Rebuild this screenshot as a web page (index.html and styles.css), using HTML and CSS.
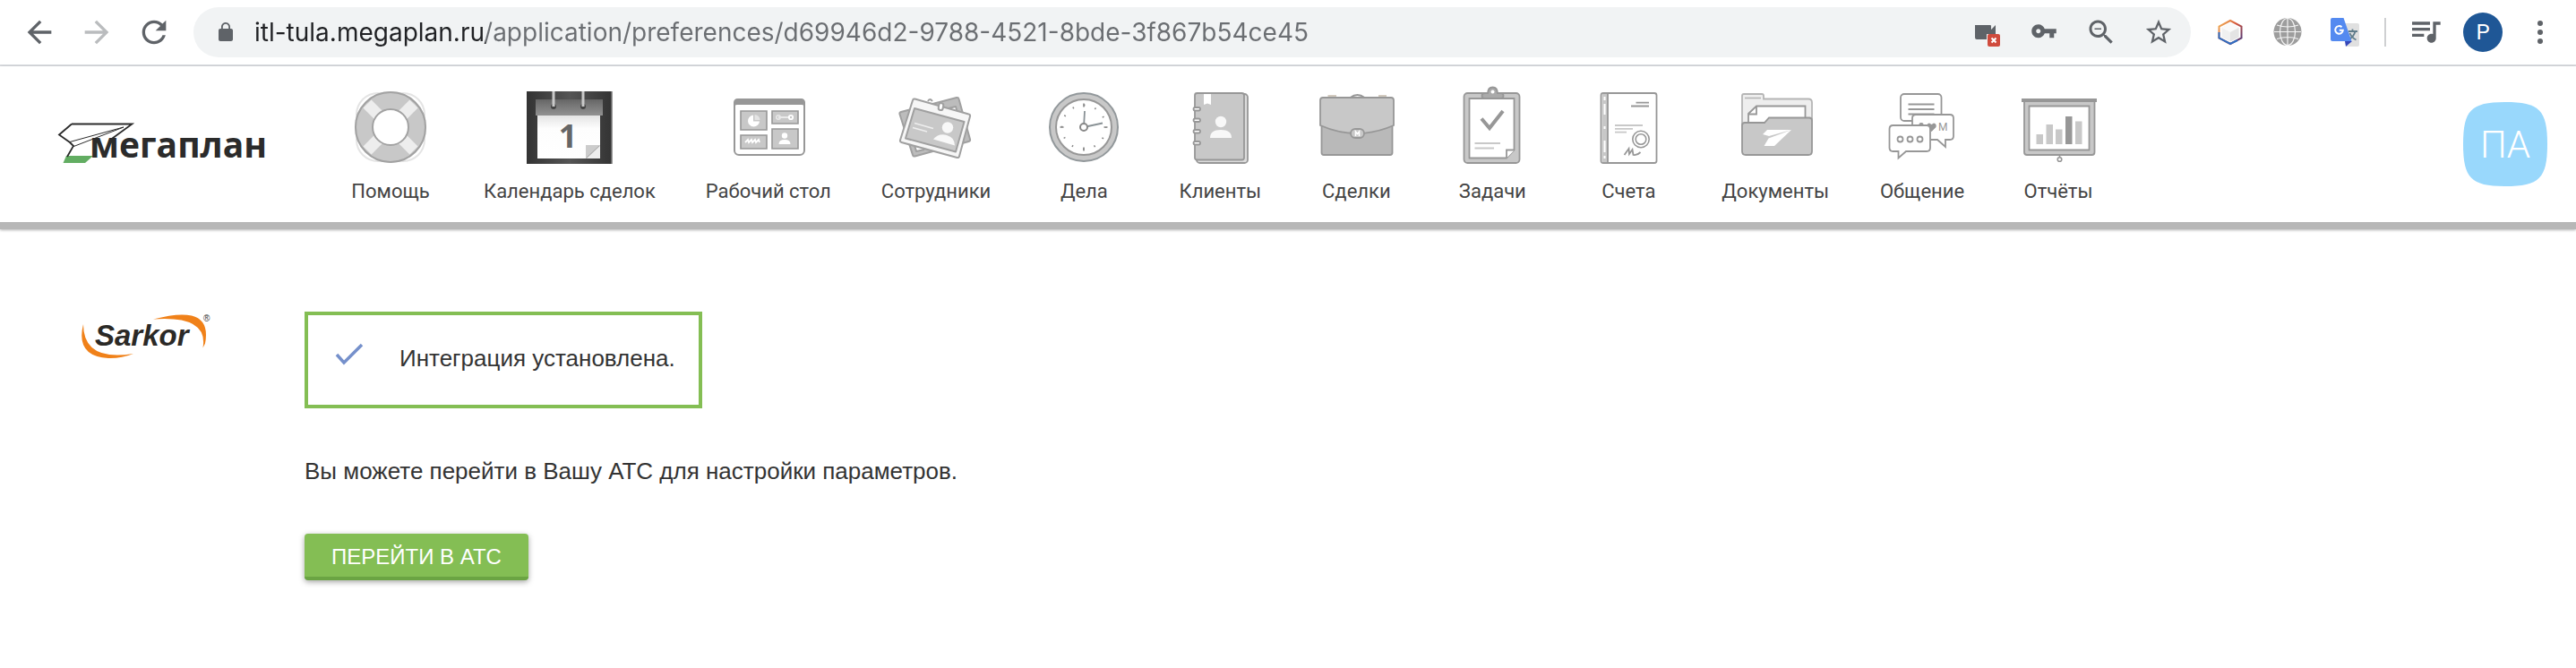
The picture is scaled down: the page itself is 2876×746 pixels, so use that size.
FILE: index.html
```
<!DOCTYPE html>
<html lang="ru">

<head>
  <meta charset="utf-8">
  <title>Мегаплан</title>
  <link rel="stylesheet" href="styles.css">
</head>

<body>
  <div class="toolbar">
    <button class="tool" aria-label="Назад">
      <svg width="40" height="40" viewBox="0 0 24 24"><path d="M20 11H7.83l5.59-5.59L12 4l-8 8 8 8 1.41-1.41L7.83 13H20z"/></svg>
    </button>
    <button class="tool tool-off" aria-label="Вперёд">
      <svg width="40" height="40" viewBox="0 0 24 24"><path d="M4 11h12.17l-5.59-5.59L12 4l8 8-8 8-1.41-1.41L16.17 13H4z"/></svg>
    </button>
    <button class="tool" aria-label="Обновить">
      <svg width="40" height="40" viewBox="0 0 24 24"><path d="M17.65 6.35C16.2 4.9 14.21 4 12 4c-4.42 0-7.99 3.58-7.99 8s3.57 8 7.99 8c3.73 0 6.84-2.55 7.73-6h-2.08c-.82 2.33-3.04 4-5.65 4-3.31 0-6-2.69-6-6s2.69-6 6-6c1.66 0 3.14.69 4.22 1.78L13 11h7V4z"/></svg>
    </button>

    <div class="omnibox">
      <button class="tool" aria-label="Сведения о сайте">
        <svg width="24" height="24" viewBox="0 0 24 24"><path d="M18 8h-1V6c0-2.8-2.2-5-5-5S7 3.200 7 6v2H6c-1.100 0-2 .9-2 2v10c0 1.100.9 2 2 2h12c1.100 0 2-.9 2-2V10c0-1.100-.9-2-2-2zM8.800 8V6c0-1.800 1.400-3.200 3.200-3.200s3.200 1.400 3.200 3.200v2z"/></svg>
      </button>
      <input class="url" type="text" aria-label="Адрес" value="itl-tula.megaplan.ru/application/preferences/d69946d2-9788-4521-8bde-3f867b54ce45">
      <button class="tool" aria-label="Камера заблокирована">
        <svg width="32" height="32" viewBox="0 0 32 32">
          <path d="M3 8h17q1 0 1 1v4l5-5v14q0 2-2 2H5q-2 0-2-2z"/>
          <path d="M16 18h16v14H16z" fill="#f1f3f4"/>
          <rect x="17" y="18" width="14" height="14" rx="2" fill="#d04b3d"/>
          <path d="M21.500 22.500l5 5M26.500 22.500l-5 5" stroke="#fff" stroke-width="2"/>
        </svg>
      </button>
      <button class="tool" aria-label="Пароли">
        <svg width="30" height="30" viewBox="0 1 24 24"><path d="M12.65 10C11.83 7.67 9.61 6 7 6c-3.31 0-6 2.69-6 6s2.69 6 6 6c2.610 0 4.830-1.670 5.650-4H17v4h4v-4h2v-4zM7 14c-1.100 0-2-.9-2-2s.9-2 2-2 2 .9 2 2-.9 2-2 2z"/></svg>
      </button>
      <button class="tool" aria-label="Масштаб">
        <svg width="36" height="36" viewBox="0 0 24 24"><path d="M15.5 14h-.79l-.28-.27C15.41 12.59 16 11.11 16 9.500 16 5.910 13.090 3 9.500 3S3 5.910 3 9.500 5.910 16 9.500 16c1.610 0 3.090-.59 4.230-1.570l.27.28v.79l5 4.990L20.490 19zm-6 0C7.010 14 5 11.990 5 9.500S7.010 5 9.500 5 14 7.010 14 9.500 11.990 14 9.500 14zM7 9h5v1H7z"/></svg>
      </button>
      <button class="tool" aria-label="В закладки">
        <svg width="34" height="34" viewBox="0 0 24 24"><path d="M22 9.240l-7.190-.62L12 2 9.190 8.630 2 9.240l5.460 4.730L5.820 21 12 17.270 18.180 21l-1.630-7.030zM12 15.400l-3.760 2.270 1-4.280-3.320-2.880 4.380-.38L12 6.100l1.710 4.040 4.380.38-3.320 2.880 1 4.280z"/></svg>
      </button>
    </div>

    <button class="tool" aria-label="Расширение">
      <svg width="32" height="32" viewBox="0 0 32 32">
        <defs>
          <linearGradient id="hex" x1="0" y1="0" x2="1" y2="1">
            <stop offset="0" stop-color="#f6c15c"/>
            <stop offset=".45" stop-color="#d5543a"/>
            <stop offset="1" stop-color="#3a3380"/>
          </linearGradient>
        </defs>
        <path d="M16 3l12.500 6.500v13L16 29 3.500 22.500v-13z" fill="#fff" stroke="url(#hex)" stroke-width="2"/>
        <path d="M3.500 16v6.500L16 29l8-4" fill="none" stroke="#2f6fc4" stroke-width="2"/>
        <path d="M16 6l9.500 5v10.500L16 26.500 6.500 21.500V11z" fill="#f0f0f0"/>
        <path d="M16 6l9.500 5-9.500 5-9.500-5z" fill="#fafafa"/>
        <path d="M16 16l9.500-5v10.500l-9.500 5z" fill="#e4e4e4"/>
      </svg>
    </button>
    <button class="tool" aria-label="Прокси">
      <svg width="32" height="32" viewBox="0 0 32 32">
        <circle cx="16" cy="15.500" r="15.500" fill="#9d9d9d"/>
        <path d="M16 0v31M1 15.500h30M4 8q12 4 24 0M4 23.500q12-4 24 0" fill="none" stroke="#f4f4f4" stroke-width="1.200"/>
        <ellipse cx="16" cy="15.500" rx="8.500" ry="15" fill="none" stroke="#f4f4f4" stroke-width="1.200"/>
      </svg>
    </button>
    <button class="tool" aria-label="Переводчик">
      <svg width="32" height="32" viewBox="0 0 32 32">
        <path d="M12 6h18q2 0 2 2v22q0 2-2 2H18z" fill="#e0e0e0"/>
        <path d="M20 15h10M24.500 12.500V15M27.500 15q-1.500 6-7 9M21.500 17q2 5 7 7.500" fill="none" stroke="#607d8b" stroke-width="1.800"/>
        <path d="M16 26h8l-7 6z" fill="#3546b8"/>
        <path d="M2 0h12.500l9 26H2q-2 0-2-2V2q0-2 2-2z" fill="#548af0"/>
        <path d="M12.500 10.300a4.300 4.300 0 1 0 1.300 3.400h-4" fill="none" stroke="#fff" stroke-width="2"/>
      </svg>
    </button>
    <span class="divider"></span>
    <button class="tool" aria-label="Медиа">
      <svg width="40" height="40" viewBox="0 1 24 24"><path d="M15 6H3v2h12zm0 4H3v2h12zM3 16h8v-2H3zM17 6v8.180c-.31-.11-.65-.18-1-.18-1.660 0-3 1.340-3 3s1.340 3 3 3 3-1.340 3-3V8h3V6z"/></svg>
    </button>
    <button class="tool" aria-label="Профиль"><span class="profile">P</span></button>
    <button class="tool" aria-label="Меню">
      <svg width="32" height="32" viewBox="0 0 32 32"><circle cx="16" cy="6" r="3"/><circle cx="16" cy="16" r="3"/><circle cx="16" cy="26" r="3"/></svg>
    </button>
  </div>

  <header class="header">
    <a class="logo" href="#" aria-label="Мегаплан">
      <svg width="244" height="48" viewBox="0 0 244 48">
        <path d="M6.500 45l3.500-8h30l-9 8z" fill="#62ad62"/>
        <path d="M16 1.500h67.500L58 20M16 1.500L2 13.500l12 8.500 4 4-7 12" fill="none" stroke="#2b2b2b" stroke-width="1.800"/>
        <path d="M14 21.500L74 5 17 27" fill="none" stroke="#2b2b2b"/>
        <text class="logo-text" x="36" y="39">мегаплан</text>
      </svg>
    </a>

    <nav class="menu">
      <a class="item" href="#">
        <svg class="icon" viewBox="0 0 96 96">
          <rect x="10" y="10" width="76" height="76" rx="24" fill="none" stroke="#e4e4e4" stroke-width="2"/>
          <circle cx="48" cy="48" r="30" fill="none" stroke="#c8c8c8" stroke-width="20"/>
          <path d="M22 22l14 14M74 22L60 36M22 74l14-14M74 74L60 60" stroke="#ededed" stroke-width="13"/>
          <circle cx="48" cy="48" r="39" fill="none" stroke="#a2a2a2" stroke-width="2"/>
          <circle cx="48" cy="48" r="20" fill="#fff" stroke="#a2a2a2" stroke-width="2"/>
        </svg>
        Помощь
      </a>
      <a class="item" href="#">
        <svg class="icon" viewBox="0 0 96 96">
          <defs>
            <linearGradient id="dark"><stop offset="0" stop-color="#333"/><stop offset=".5" stop-color="#555"/><stop offset="1" stop-color="#333"/></linearGradient>
            <linearGradient id="head" x2="0" y2="1"><stop offset="0" stop-color="#666"/><stop offset="1" stop-color="#929292"/></linearGradient>
            <linearGradient id="sheet" x2="0" y2="1"><stop offset="0" stop-color="#e4e4e4"/><stop offset=".3" stop-color="#fdfdfd"/><stop offset="1" stop-color="#fff"/></linearGradient>
          </defs>
          <path d="M0 8h96v81H0z" fill="url(#dark)"/>
          <path d="M94.500 8H96v81h-1.500z" fill="#999"/>
          <path d="M10 17h75v18H10z" fill="url(#head)"/>
          <path d="M12 35h70v48H12z" fill="url(#sheet)"/>
          <circle cx="30" cy="25" r="3" fill="#444"/>
          <circle cx="63" cy="25" r="3" fill="#444"/>
          <path d="M30 8v17M63 8v17" stroke="#c9c9c9" stroke-width="3"/>
          <text class="day" x="46" y="71">1</text>
          <path d="M66 68h16v15H66z" fill="#ccc"/>
          <path d="M82 69v14H67z" fill="#efefef"/>
          <path d="M81 69L67 82" stroke="#aaa"/>
        </svg>
        Календарь сделок
      </a>
      <a class="item" href="#">
        <svg class="icon" viewBox="0 0 96 96">
          <rect x="10" y="17" width="78" height="62" rx="5" fill="#fff" stroke="#979797" stroke-width="2"/>
          <path d="M9 27v-6q0-5 5-5h70q5 0 5 5v6q-1-4-4-4H13q-3 0-4 4z" fill="#979797"/>
          <g fill="#c8c8c8" stroke="#979797" stroke-width="1.600">
            <path d="M17 30h29v21H17zM52 30h29v14H52zM17 57h29v15H17zM52 50h29v22H52z"/>
          </g>
          <path d="M31 34.500a6.500 6.500 0 1 0 7 7h-7z" fill="#fff"/>
          <path d="M32.500 34a6 6 0 0 1 6 6h-6z" fill="#e4e4e4"/>
          <path d="M59 37h13" stroke="#f4f4f4" stroke-width="1.500"/>
          <circle cx="59" cy="37" r="2.200" fill="none" stroke="#e8e8e8" stroke-width="1.500"/>
          <circle cx="73" cy="37" r="2.200" fill="none" stroke="#fff" stroke-width="1.800"/>
          <path d="M22 65l3-3 1 3 3-3 1 3 3-3 1 3 3-3 1 3" fill="none" stroke="#fff" stroke-width="1.800"/>
          <circle cx="66" cy="57.500" r="3.200" fill="#fff"/>
          <path d="M59.500 67q0-5 6.500-5t6.500 5z" fill="#fff"/>
        </svg>
        Рабочий стол
      </a>
      <a class="item" href="#">
        <svg class="icon" viewBox="0 0 96 96">
          <g stroke="#a0a0a0" stroke-width="2" stroke-linejoin="round">
            <path d="M7.500 33.500q-.5-2 1.500-2.500l62-16q2-.5 2.500 1.500l12.500 45q.5 2-1.500 2.500l-60 16.500q-2 .5-2.500-1.500z" fill="#bcbcbc"/>
            <path d="M62 27l8-2 2 7M24 68l2 7 9-2" fill="#fff"/>
            <path d="M22 18q.5-2 2.500-1.500l60 17q2 .5 1.500 2.500L74 80.500q-.5 2-2.500 1.500l-62-17q-2-.5-1.500-2.500z" fill="#f6f6f6"/>
            <path d="M24 27l55.500 15L70 75.500 14 60.500z" fill="#c8c8c8"/>
            <path d="M39 19q2-4 5 0" fill="none"/>
            <rect x="51" y="21" width="5" height="8" rx="2.500" fill="#fff" transform="rotate(10 53 25)"/>
          </g>
          <path d="M24 43.500l21 6M22 48.500l16 4.500" stroke="#eee" stroke-width="1.800"/>
          <circle cx="61" cy="48.500" r="6.200" fill="#f8f8f8"/>
          <path d="M45 61.500q6-7 15-4.500t9 11.500z" fill="#f8f8f8"/>
        </svg>
        Сотрудники
      </a>
      <a class="item" href="#">
        <svg class="icon" viewBox="0 0 96 96">
          <circle cx="48" cy="48" r="38" fill="#c8c8c8" stroke="#92989b" stroke-width="2"/>
          <circle cx="48" cy="48" r="31" fill="#fff" stroke="#979797" stroke-width="2"/>
          <circle cx="48" cy="48" r="24.500" fill="none" stroke="#888" stroke-width="2" stroke-dasharray="1.500 11.328" stroke-dashoffset=".75"/>
          <path d="M48 21.500v4M48 70.500v4M21.500 48h4M70.500 48h4" stroke="#888" stroke-width="1.600"/>
          <path d="M48 48l1-18M48 48l21-4.500" stroke="#8a9296" stroke-width="1.800"/>
          <circle cx="48" cy="48" r="4" fill="#fff" stroke="#888" stroke-width="2"/>
        </svg>
        Дела
      </a>
      <a class="item" href="#">
        <svg class="icon" viewBox="0 0 96 96">
          <g stroke="#979797" stroke-width="1.800">
            <rect x="22" y="11" width="57" height="77" rx="3.500" fill="#dcdcdc"/>
            <rect x="20" y="10" width="55" height="74.500" rx="2.500" fill="#c8c8c8"/>
            <rect x="18.500" y="26" width="7.500" height="3.500" rx="1.700" fill="#fff"/>
            <rect x="18.500" y="38.500" width="7.500" height="3.500" rx="1.700" fill="#fff"/>
            <rect x="18.500" y="51" width="7.500" height="3.500" rx="1.700" fill="#fff"/>
            <rect x="18.500" y="64" width="7.500" height="3.500" rx="1.700" fill="#fff"/>
          </g>
          <path d="M30 11h8v12l-4-1.500-4 1.500z" fill="#fff"/>
          <circle cx="49" cy="42" r="6.200" fill="#f8f8f8"/>
          <path d="M37 60q0-9 12-9t12 9z" fill="#f8f8f8"/>
        </svg>
        Клиенты
      </a>
      <a class="item" href="#">
        <svg class="icon" viewBox="0 0 96 96">
          <path d="M16.500 12h9.500v3h-9.500zM73 12h9v3h-9z" fill="#d3cbc0"/>
          <g stroke="#979797" stroke-width="1.800">
            <path d="M9.500 45v31.500q0 2.500 2.500 2.500h74q2.500 0 2.500-2.500V45z" fill="#b9b9b9"/>
            <path d="M8 18q0-3 3-3h76q3 0 3 3v28Q49 64 8 46z" fill="#c8c8c8"/>
            <path d="M41.500 15q8-6 16 0" fill="none"/>
            <rect x="42" y="50" width="15" height="10" rx="5" fill="#c8c8c8"/>
          </g>
          <path d="M47.500 58v-5l2 2.500 2-2.500v5" fill="none" stroke="#fff" stroke-width="1.600"/>
        </svg>
        Сделки
      </a>
      <a class="item" href="#">
        <svg class="icon" viewBox="0 0 96 96">
          <g stroke="#979797" stroke-width="1.800">
            <rect x="16.500" y="10" width="62" height="78" rx="4" fill="#c8c8c8"/>
            <path d="M22.500 16h50v57.500L64 82.500H22.500z" fill="#fff"/>
            <path d="M64 82.500v-9h9" fill="#fff"/>
            <rect x="36.500" y="10" width="24" height="6" rx="3" fill="#aaa"/>
            <path d="M43 11q0-7.500 5.500-7.500T54 11" fill="#aaa"/>
          </g>
          <circle cx="48.500" cy="8.500" r="2" fill="#fff"/>
          <path d="M36 38.500l9 10.500 15-19" fill="none" stroke="#979797" stroke-width="4"/>
          <path d="M28.500 66H57M28.500 71.500H50" stroke="#c8c8c8" stroke-width="1.800"/>
        </svg>
        Задачи
      </a>
      <a class="item" href="#">
        <svg class="icon" viewBox="0 0 96 96">
          <rect x="17.500" y="10" width="62" height="78" rx="2.500" fill="#fff" stroke="#979797" stroke-width="1.800"/>
          <path d="M18.400 10.900H25v76.200h-6.600z" fill="#c8c8c8"/>
          <path d="M25 10v78M56.500 20.700H71M51 24.500h20" stroke="#979797" stroke-width="1.800"/>
          <path d="M21.500 14v4M21.500 22v12M21.500 47v3M21.500 63v13M21.500 80v3" stroke="#fff" stroke-width="2"/>
          <path d="M33 46h31M33 49.800h20M33 53.600h13" stroke="#c8c8c8" stroke-width="1.800"/>
          <g fill="none" stroke="#979797" stroke-width="1.600">
            <circle cx="62" cy="61.500" r="9.200"/>
            <circle cx="62" cy="61.500" r="5.800"/>
            <path d="M43.500 79l5-7 .5 6 3.500-5 1 6q4 1 8-3" stroke-width="1.800"/>
          </g>
        </svg>
        Счета
      </a>
      <a class="item" href="#">
        <svg class="icon" viewBox="0 0 96 96">
          <path d="M11 50V13q0-2 2-2h20q2 0 2 2v3.500h50q4 0 4 4V50z" fill="#eee" stroke="#b5b5b5" stroke-width="1.800"/>
          <path d="M14 15.500h18" stroke="#b5b5b5" stroke-width="1.600"/>
          <g stroke="#979797" stroke-width="1.800">
            <path d="M18 50V33l9-8.500h54.500V50z" fill="#fff"/>
            <path d="M18 33.500h9v-9" fill="none"/>
            <path d="M11 46q0-3 3-3h22l5-5.500h45q3 0 3 3V75q0 4-4 4H15q-4 0-4-4z" fill="#c8c8c8"/>
          </g>
          <path d="M34 56l5-5h27L41 58zM66 51L47 69H35.500l5-8.500z" fill="#fff"/>
        </svg>
        Документы
      </a>
      <a class="item" href="#">
        <svg class="icon" viewBox="0 0 96 96">
          <g fill="#fff" stroke="#979797" stroke-width="1.800">
            <rect x="24" y="11" width="45.500" height="30" rx="4"/>
            <path d="M32.500 22.500h29M32.500 28h29M32.500 33.500h29"/>
            <path d="M41 34h38q4 0 4 4v20q0 4-4 4h-5v8l-9-8H41q-4 0-4-4V38q0-4 4-4z"/>
          </g>
          <path d="M58.500 53l-5-5q-1-4 2.500-4.500l2.500 1.500 2.500-1.500q3.500.5 2.500 4.500z" fill="#979797"/>
          <text class="bubble-text" x="66" y="52">M</text>
          <path d="M45 45q2-2 4 0" fill="none" stroke="#979797" stroke-width="1.800"/>
          <g fill="#fff" stroke="#979797" stroke-width="1.800">
            <path d="M15.500 46H53q4 0 4 4v21q0 4-4 4H30l-8.500 7.500V75h-6q-4 0-4-4V50q0-4 4-4z"/>
            <circle cx="23.500" cy="61.500" r="3"/>
            <circle cx="34.500" cy="61.500" r="3"/>
            <circle cx="45.500" cy="61.500" r="3"/>
          </g>
        </svg>
        Общение
      </a>
      <a class="item" href="#">
        <svg class="icon" viewBox="0 0 96 96">
          <path d="M10 18h78.500v58q0 3-3 3H13q-3 0-3-3z" fill="#c8c8c8" stroke="#979797" stroke-width="1.800"/>
          <path d="M7 16h84v4H7z" fill="#979797"/>
          <path d="M15.500 24.500h67v49h-67z" fill="#fff" stroke="#979797" stroke-width="1.800"/>
          <path d="M23.500 56H31v11h-7.500zM34.500 45H42v22h-7.500zM45 50.500h7.500V67H45zM67 41.500h7.500V67H67z" fill="#c8c8c8"/>
          <path d="M56 36h7.500v31H56z" fill="#979797"/>
          <path d="M49.500 79v3" stroke="#979797" stroke-width="1.600"/>
          <circle cx="49.500" cy="84" r="2.300" fill="#fff" stroke="#979797" stroke-width="1.600"/>
        </svg>
        Отчёты
      </a>
    </nav>

    <button class="user" aria-label="Профиль пользователя">
      <svg width="94" height="94" viewBox="0 0 94 94">
        <path d="M47 0c38 0 47 9 47 47s-9 47-47 47S0 85 0 47 9 0 47 0z" fill="#99d8fc"/>
        <text class="user-text" x="47" y="62">ПА</text>
      </svg>
    </button>
  </header>

  <main class="content">
    <svg class="partner" width="148" height="52" viewBox="0 0 148 52" role="img" aria-label="Sarkor">
      <path d="M3 12q-9 36 28 38 14 .5 28-5-56 9-56-33z" fill="#f08119"/>
      <path d="M81 6.500q28-7.500 43-4 20 5 15 31l-2.500 5Q143 2 81 6.500z" fill="#f08119"/>
      <text class="partner-text" x="16" y="36">Sarkor</text>
      <text class="partner-mark" x="137" y="9">®</text>
    </svg>

    <section class="result">
      <div class="notice">
        <svg width="32" height="44" viewBox="0 0 32 44"><path d="M2 18l8 9L30 7" fill="none" stroke="#7590cb" stroke-width="3.500"/></svg>
        <span>Интеграция установлена.</span>
      </div>
      <p class="hint">Вы можете перейти в Вашу АТС для настройки параметров.</p>
      <button class="go">ПЕРЕЙТИ В АТС</button>
    </section>
  </main>
</body>

</html>
```

FILE: styles.css
```
* {
  box-sizing: border-box;
}

body {
  margin: 0;
  background: #fff;
  color: #333;
  font-family: "Liberation Sans", Arial, sans-serif;
  font-size: 26px;
  line-height: 32px;
}

button {
  padding: 0;
  border: 0;
  background: none;
  font-family: inherit;
}

svg {
  display: block;
  flex: none;
}

/* browser bar */
.toolbar {
  display: flex;
  align-items: center;
  padding: 8px 8px 8px 12px;
  border-bottom: 2px solid #dadce0;
}

.tool {
  display: flex;
  flex: none;
  align-items: center;
  justify-content: center;
  width: 64px;
  height: 56px;
  fill: #5f6368;
}

.tool-off {
  fill: #babcbe;
}

.omnibox {
  display: flex;
  flex: 1;
  align-items: center;
  min-width: 0;
  margin-left: 12px;
  margin-right: 12px;
  padding: 0 4px;
  border-radius: 28px;
  background: #f1f3f4;
}

/* host part of the address is darker than the path */
.url {
  flex: 1;
  min-width: 0;
  height: 56px;
  padding: 0;
  border: 0;
  outline: 0;
  background: linear-gradient(to right, #202124 258px, #6b6e72 258px);
  -webkit-background-clip: text;
  background-clip: text;
  color: #6b6e72;
  -webkit-text-fill-color: transparent;
  font-family: Inter, Roboto, sans-serif;
  font-size: 28px;
}

.divider {
  width: 2px;
  height: 32px;
  margin: 0 12px;
  background: #cfd0d2;
}

.profile {
  width: 44px;
  border-radius: 50%;
  background: #1f5796;
  color: #fff;
  font-family: Roboto, sans-serif;
  font-size: 24px;
  line-height: 44px;
  text-align: center;
}

/* site header */
.header {
  display: flex;
  align-items: center;
  padding: 20px 32px 20px 64px;
  border-bottom: 8px solid #b7b7b7;
  box-shadow: 0 1px 3px rgba(0, 0, 0, 0.3);
}

.logo-text {
  fill: #2b2b2b;
  font-family: "Open Sans", sans-serif;
  font-size: 39px;
  font-weight: 700;
}

.menu {
  display: flex;
  gap: 56px;
  margin-left: 80px;
  margin-right: auto;
}

.item {
  display: flex;
  flex-direction: column;
  align-items: center;
  gap: 10px;
  min-width: 96px;
  color: #444;
  font-family: Roboto, sans-serif;
  font-size: 22px;
  line-height: 28px;
  text-decoration: none;
  white-space: nowrap;
}

.icon {
  width: 96px;
  height: 96px;
}

.day {
  fill: #666;
  font-family: "Open Sans", sans-serif;
  font-size: 36px;
  font-weight: 700;
  text-anchor: middle;
}

.bubble-text {
  fill: #979797;
  font-size: 12px;
}

.user-text {
  fill: #fff;
  font-family: Roboto, sans-serif;
  font-size: 42px;
  font-weight: 300;
  text-anchor: middle;
}

/* page */
.content {
  display: flex;
  align-items: flex-start;
  gap: 102px;
  padding: 92px 32px 92px 90px;
}

.partner {
  margin-top: 2px;
}

.partner-text {
  fill: #2b2926;
  font-size: 33px;
  font-weight: 700;
  font-style: italic;
}

.partner-mark {
  fill: #333;
  font-size: 10px;
}

.notice {
  display: flex;
  align-items: center;
  gap: 40px;
  width: fit-content;
  padding: 26px 26px 30px 30px;
  border: 4px solid #84be54;
}

.hint {
  margin: 54px 0;
}

.go {
  padding: 6px 30px 2px;
  border-bottom: 4px solid #6ba443;
  border-radius: 4px;
  background: #84be54;
  box-shadow: 0 2px 6px rgba(0, 0, 0, 0.35);
  color: #fff;
  font-size: 24px;
  line-height: 40px;
}
```
